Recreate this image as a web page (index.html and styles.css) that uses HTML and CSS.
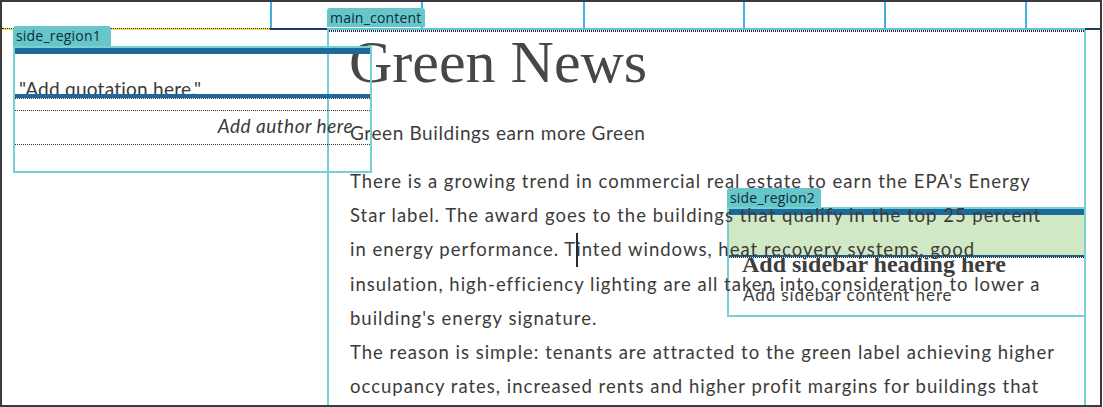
FILE: index.html
```html
<!DOCTYPE html>
<html>
<head>
<meta charset="utf-8">
<title>Green News</title>
<link rel="stylesheet" href="styles.css">
</head>
<body>
<div class="canvas">
  <div class="ruler">
    <div class="rcol rc-a"></div>
    <div class="rcol rc-b"></div>
    <div class="rcol rc-c"></div>
    <div class="rcol rc-d"></div>
    <div class="rcol rc-e"></div>
    <div class="rcol rc-f"></div>
    <div class="rcol rc-g"></div>
  </div>
  <div class="guides">
    <div class="guide g-header"></div>
    <div class="guide g-navy g-short"></div>
    <div class="guide g-cyan"></div>
    <div class="guide g-navy g-end"></div>
  </div>
  <div class="stage">
    <div class="gutter"></div>
    <div class="main">
      <div class="tab tab-main">main_content</div>
      <h1 class="title">Green News</h1>
      <h2 class="subtitle">Green Buildings earn more Green</h2>
      <div class="body">
        <p>There is a growing trend in commercial real estate to earn the EPA's Energy<br>Star label. The award goes to the buildings that qualify in the top 25 percent<br>in energy performance. T<span class="caret"></span>inted windows, heat recovery systems, good<br>insulation, high-efficiency lighting are all taken into consideration to lower a<br>building's energy signature.</p>
        <p>The reason is simple: tenants are attracted to the green label achieving higher<br>occupancy rates, increased rents and higher profit margins for buildings that</p>
      </div>
      <aside class="side2">
        <div class="tab tab-flow tab-s2">side_region2</div>
        <div class="side2-box">
          <div class="s2-bar"></div>
          <div class="s2-band"></div>
          <div class="s2-rule"></div>
          <h3 class="s2-heading">Add sidebar heading here</h3>
          <p class="s2-text">Add sidebar content here</p>
        </div>
      </aside>
    </div>
    <aside class="side1">
      <div class="tab tab-flow tab-s1">side_region1</div>
      <div class="side1-box">
        <div class="s1-bar"></div>
        <p class="s1-quote">"Add quotation here."</p>
        <div class="s1-qbar"></div>
        <div class="s1-dots"></div>
        <p class="s1-author">Add author here</p>
      </div>
    </aside>
  </div>
</div>
</body>
</html>
```

FILE: styles.css
```css
* { box-sizing: border-box; margin: 0; padding: 0; }
html, body { background: #fff; }
body { margin: 0; font-family: "Lato", sans-serif; }

.canvas {
  width: 1102px;
  height: 407px;
  border: 2px solid #3b3b3b;
  display: flex;
  flex-direction: column;
  overflow: hidden;
  background: #fff;
}

/* column ruler */
.ruler { display: flex; height: 26px; flex: none; }
.rcol { flex: none; height: 100%; }
.rcol + .rcol { border-left: 2px solid #44afe2; }
.rc-a { width: 268px; }
.rc-b { width: 151px; }
.rc-c { width: 162px; }
.rc-d { width: 160px; }
.rc-e { width: 141px; }
.rc-f { width: 141px; }
.rc-g { flex: 1; }

.guides { display: flex; height: 2px; flex: none; }
.guide { height: 2px; flex: none; }
.g-header { width: 268px; border-top: 1px dotted #333; background: #ece04c; }
.g-navy { background: #27366b; }
.g-short { width: 57px; }
.g-cyan { width: 758px; background: #5cc3e2; }
.g-end { flex: 1; }

/* stage */
.stage { flex: 1; display: flex; position: relative; min-height: 0; }
.gutter { width: 325px; flex: none; }

.main {
  width: 759px;
  flex: none;
  position: relative;
  border-left: 2px solid #76d0d4;
  border-right: 2px solid #76d0d4;
  padding: 2px 0 0 21px;
  background: repeating-linear-gradient(90deg, #2a2a2a 0 1px, #fff 1px 2px) top left / 100% 2px no-repeat;
}

.tab {
  height: 19px;
  padding: 0 6px 0 3px;
  background: #66c6c9;
  color: #0f2d3a;
  font: 14px/19px "Open Sans", sans-serif;
  letter-spacing: 0.2px;
  border-radius: 3px 3px 0 0;
  white-space: nowrap;
}
.tab-main { position: absolute; left: -2px; top: -22px; width: 98px; }
.tab-flow { position: relative; z-index: 2; }
.tab-s1 { width: 98px; }
.tab-s2 { width: 94px; }

.title {
  font: normal 60px/60px "Liberation Serif", serif;
  color: #474747;
  margin-left: -1px;
}
.subtitle {
  font: normal 19px/34px "Lato", sans-serif;
  letter-spacing: 0.6px;
  color: #3d3d3d;
  margin-top: 24px;
}
.body {
  margin-top: 14px;
  position: relative;
  z-index: 1;
  font-size: 18.5px;
  line-height: 34.2px;
  letter-spacing: 1px;
  color: #3d3b39;
  white-space: nowrap;
}
.caret {
  display: inline-block;
  width: 0;
  height: 34px;
  border-left: 2px solid #2a2a2a;
  margin-right: -2px;
  vertical-align: bottom;
}

/* side region 2 */
.side2 {
  position: absolute;
  left: 398px;
  top: 158px;
  right: -2px;
  display: flex;
  flex-direction: column;
  align-items: flex-start;
}
.side2-box {
  align-self: stretch;
  height: 110px;
  border: 2px solid #76d0d4;
}
.s2-bar { height: 6px; background: #1c6a9b; }
.s2-band { height: 40px; background: #d1e8c5; }
.s2-rule {
  height: 3px;
  position: relative;
  background:
    linear-gradient(#1c5d8c, #1c5d8c) top / 100% 2px no-repeat,
    repeating-linear-gradient(90deg, #222 0 1px, #fff 1px 2px);
}
.s2-heading {
  font: bold 24px/20px "Liberation Serif", serif;
  color: #3d3d3d;
  margin: -4px 0 0 13px;
}
.s2-text {
  font-size: 17px;
  line-height: 20px;
  letter-spacing: 0.9px;
  margin: 11px 0 0 14px;
  color: #3d3d3d;
}

/* side region 1 */
.side1 {
  position: absolute;
  left: 11px;
  top: -4px;
  width: 359px;
  display: flex;
  flex-direction: column;
  align-items: flex-start;
}
.side1 .tab { height: 20px; line-height: 20px; }
.side1-box {
  align-self: stretch;
  height: 127px;
  border: 2px solid #76d0d4;
}
.s1-bar { height: 6px; background: #1c6a9b; }
.s1-quote {
  height: 40px;
  overflow: hidden;
  padding: 25px 0 0 4px;
  font-size: 19px;
  line-height: 20px;
  letter-spacing: 0.25px;
  color: #3a3a3a;
}
.s1-qbar { height: 4px; background: #1c6a9b; }
.s1-dots { border-top: 1px dotted #333; }
.s1-author {
  margin-top: 11px;
  height: 35px;
  border-top: 1px dotted #333;
  border-bottom: 1px dotted #333;
  font: italic 19px/30px "Lato", sans-serif;
  letter-spacing: 0.5px;
  color: #3a3a3a;
  text-align: right;
  padding-right: 17px;
}
```
